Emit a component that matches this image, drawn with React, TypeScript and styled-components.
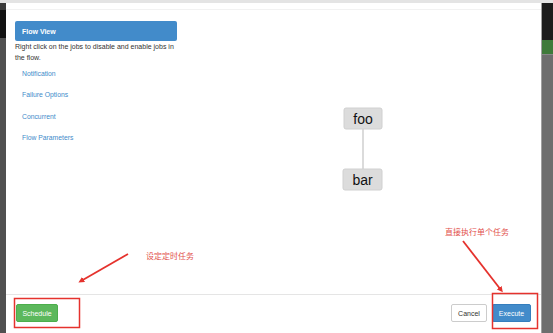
import React from "react";
import styled, { createGlobalStyle } from "styled-components";

const Global = createGlobalStyle`
  html, body { margin: 0; padding: 0; height: 333px; overflow: hidden; }
  body { font-family: "Liberation Sans", Arial, sans-serif; background: #555; }
  #root { height: 333px; }
`;

const Page = styled.div`
  position: relative;
  display: flex;
  flex-direction: column;
  height: 333px;
  width: 553px;
`;

const TopBar = styled.div`
  height: 3px;
  background: #e4e4e4;
  flex-shrink: 0;
`;

const Row = styled.div`
  flex: 1;
  display: flex;
  min-height: 0;
`;

const LeftStrip = styled.div`
  width: 6px;
  display: flex;
  flex-direction: column;
  background: #505050;
`;

const StripBlock = styled.div<{ $h: number; $bg: string }>`
  height: ${(p) => p.$h}px;
  background: ${(p) => p.$bg};
  flex-shrink: 0;
`;

const RightStrip = styled.div`
  width: 11px;
  display: flex;
  flex-direction: column;
  background: #6e6e6e;
  border-left: 1px solid #a0a0a0;
`;

const Modal = styled.div`
  flex: 1;
  display: flex;
  flex-direction: column;
  background: #fff;
`;

const Header = styled.div`
  height: 6px;
  border-bottom: 1px solid #f2f2f2;
  flex-shrink: 0;
`;

const Body = styled.div`
  flex: 1;
  display: flex;
  padding: 11px 10px 0 9px;
  min-height: 0;
`;

const LeftPanel = styled.div`
  width: 162px;
  display: flex;
  flex-direction: column;
`;

const ViewButton = styled.div`
  height: 20px;
  background: #428bca;
  border-radius: 2px;
  color: #fff;
  font-size: 7px;
  font-weight: bold;
  display: flex;
  align-items: center;
  padding-left: 7px;
`;

const Hint = styled.div`
  font-size: 7px;
  line-height: 10.5px;
  color: #333;
  padding-top: 1px;
`;

const NavItem = styled.div`
  height: 21.3px;
  display: flex;
  align-items: center;
  padding-left: 7px;
  font-size: 6.8px;
  color: #428bca;
`;

const GraphPanel = styled.div`
  flex: 1;
  position: relative;
`;

const Footer = styled.div`
  height: 29px;
  flex-shrink: 0;
  border-top: 1px solid #e5e5e5;
  display: flex;
  align-items: flex-start;
  padding: 9px 10px 0 10px;
  gap: 5px;
`;

const Btn = styled.div<{ $variant: "success" | "default" | "primary"; $w: number }>`
  height: 18px;
  width: ${(p) => p.$w}px;
  box-sizing: border-box;
  border-radius: 2px;
  font-size: 7px;
  display: flex;
  align-items: center;
  justify-content: center;
  background: ${(p) =>
    p.$variant === "success" ? "#5cb85c" : p.$variant === "primary" ? "#428bca" : "#fff"};
  color: ${(p) => (p.$variant === "default" ? "#333" : "#fff")};
  border: 1px solid
    ${(p) =>
      p.$variant === "success" ? "#4cae4c" : p.$variant === "primary" ? "#357ebd" : "#ccc"};
`;

const Spacer = styled.div`
  flex: 1;
`;

const Overlay = styled.svg`
  position: absolute;
  left: 0;
  top: 0;
  width: 553px;
  height: 333px;
  pointer-events: none;
`;

const Note = styled.div<{ $x: number; $y: number }>`
  position: absolute;
  left: ${(p) => p.$x}px;
  top: ${(p) => p.$y}px;
  font-family: "Liberation Sans", "Noto Sans CJK SC", sans-serif;
  font-size: 8px;
  color: #e2504c;
  white-space: nowrap;
`;

export default function App() {
  return (
    <>
      <Global />
      <Page>
        <TopBar />
        <Row>
          <LeftStrip>
            <StripBlock $h={7} $bg="#3a3a3a" />
            <StripBlock $h={28} $bg="#111" />
          </LeftStrip>
          <Modal>
            <Header />
            <Body>
              <LeftPanel>
                <ViewButton>Flow View</ViewButton>
                <Hint>Right click on the jobs to disable and enable jobs in the flow.</Hint>
                <NavItem>Notification</NavItem>
                <NavItem>Failure Options</NavItem>
                <NavItem>Concurrent</NavItem>
                <NavItem>Flow Parameters</NavItem>
              </LeftPanel>
              <GraphPanel>
                <svg width="354" height="264" style={{ display: "block" }}>
                  <line x1="186" y1="108" x2="186" y2="148" stroke="#cfcfcf" strokeWidth="1.5" />
                  <rect x="167" y="87" width="38" height="21" rx="2" fill="#dcdcdc" stroke="#d0d0d0" />
                  <text x="186" y="103" textAnchor="middle" fontSize="14" fontFamily="Liberation Sans, Arial, sans-serif" fill="#111">foo</text>
                  <rect x="166" y="148" width="39" height="21" rx="2" fill="#dcdcdc" stroke="#d0d0d0" />
                  <text x="185.5" y="164" textAnchor="middle" fontSize="14" fontFamily="Liberation Sans, Arial, sans-serif" fill="#111">bar</text>
                </svg>
              </GraphPanel>
            </Body>
            <Footer>
              <Btn $variant="success" $w={42}>Schedule</Btn>
              <Spacer />
              <Btn $variant="default" $w={36}>Cancel</Btn>
              <Btn $variant="primary" $w={39}>Execute</Btn>
            </Footer>
          </Modal>
          <RightStrip>
            <StripBlock $h={37} $bg="#1c1c1c" />
            <StripBlock $h={14} $bg="#3f7a3a" />
            <StripBlock $h={1} $bg="#888" />
          </RightStrip>
        </Row>

        <Overlay viewBox="0 0 553 333">
          <defs>
            <marker id="ah" markerWidth="6" markerHeight="6" refX="3" refY="3" orient="auto" markerUnits="userSpaceOnUse">
              <path d="M0,0 L6,3 L0,6 Z" fill="#e5322d" />
            </marker>
          </defs>
          <line x1="128" y1="254" x2="81" y2="281" stroke="#e5322d" strokeWidth="1.8" markerEnd="url(#ah)" />
          <line x1="463" y1="241" x2="501" y2="290" stroke="#e5322d" strokeWidth="1.8" markerEnd="url(#ah)" />
          <rect x="14.5" y="298.5" width="65" height="29" fill="none" stroke="#e5322d" strokeWidth="1.5" />
          <rect x="492.5" y="293.5" width="45" height="35" fill="none" stroke="#e5322d" strokeWidth="1.5" />
        </Overlay>
        <Note $x={146} $y={250}>设定定时任务</Note>
        <Note $x={445} $y={226}>直接执行单个任务</Note>
      </Page>
    </>
  );
}
